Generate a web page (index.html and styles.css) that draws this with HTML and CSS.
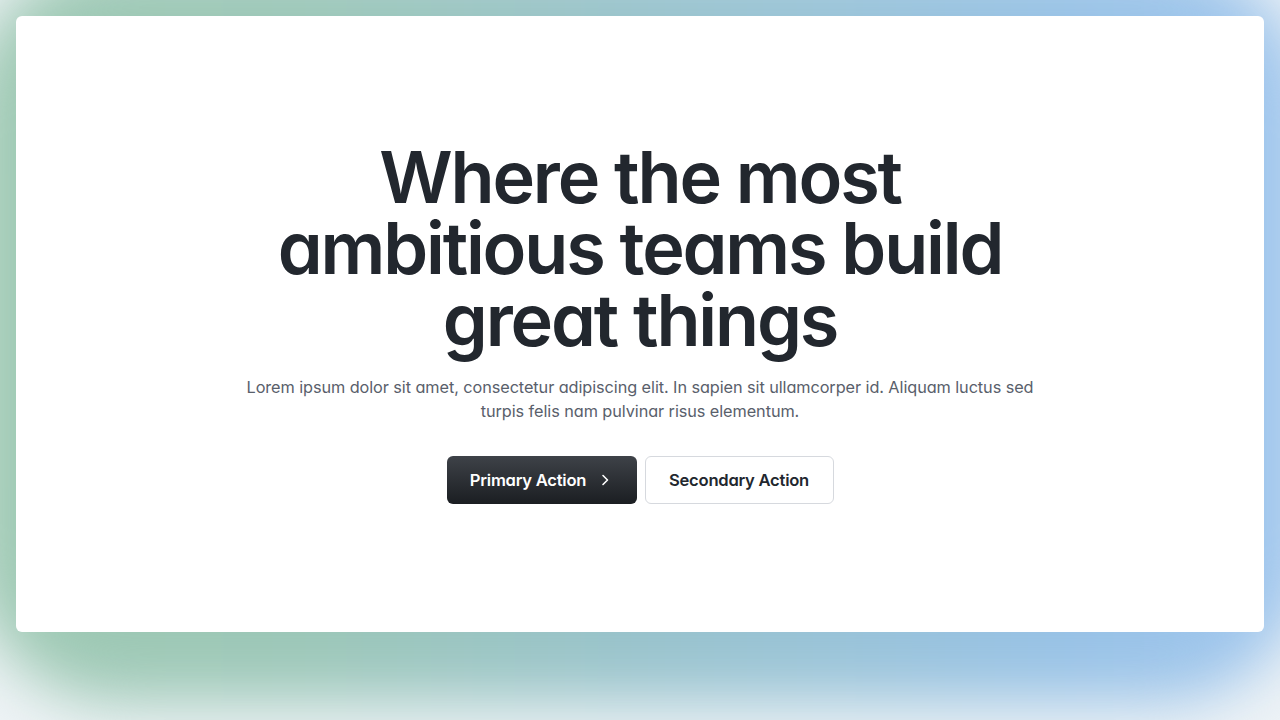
FILE: index.html
```html
<!DOCTYPE html>
<html lang="en">
<head>
<meta charset="utf-8">
<title>Hero</title>
<link rel="stylesheet" href="styles.css">
</head>
<body>
<div class="backdrop"></div>
<main class="card">
  <section class="hero">
    <h1 class="hero-title">Where the most ambitious teams build great things</h1>
    <p class="hero-text">Lorem ipsum dolor sit amet, consectetur adipiscing elit. In sapien sit ullamcorper id. Aliquam luctus sed turpis felis nam pulvinar risus elementum.</p>
    <div class="actions">
      <a class="btn btn-primary" href="#">Primary Action
        <svg class="chev" width="16" height="16" viewBox="0 0 16 16" fill="none"><path d="M6 3.5 10.5 8 6 12.5" stroke="currentColor" stroke-width="1.6" stroke-linecap="round" stroke-linejoin="round"/></svg>
      </a>
      <a class="btn btn-secondary" href="#">Secondary Action</a>
    </div>
  </section>
</main>
</body>
</html>
```
FILE: styles.css
```css
* { box-sizing: border-box; }
html, body { margin: 0; height: 100%; }
body {
  background: #eef3f6;
  padding: 16px;
  font-family: Inter, "Noto Sans", sans-serif;
  font-feature-settings: "cv11" 1;
  overflow: hidden;
  position: relative;
}
.backdrop {
  position: absolute;
  left: -30px;
  right: -30px;
  top: -40px;
  bottom: 18px;
  border-radius: 150px;
  background: linear-gradient(90deg, #9ec9b2 0%, #9cc7b8 25%, #99c3cc 50%, #98c2e6 82%, #a0c6ee 100%);
  filter: blur(30px);
  z-index: 0;
}
.card {
  position: relative;
  z-index: 1;
  background: #fff;
  border-radius: 6px;
  height: 616px;
  display: flex;
  align-items: center;
  justify-content: center;
}
.hero {
  width: 800px;
  display: flex;
  flex-direction: column;
  align-items: center;
  text-align: center;
  margin-top: -3px;
}
.hero-title {
  margin: 0;
  font-size: 72px;
  line-height: 71.5px;
  font-weight: 600;
  letter-spacing: -0.03em;
  color: #22272e;
  width: 760px;
}
.hero-text {
  margin: 20px 0 0;
  font-size: 16.3px;
  line-height: 24px;
  color: #59606b;
  letter-spacing: -0.005em;
}
.actions {
  margin-top: 33px;
  display: flex;
  gap: 8px;
}
.btn {
  display: inline-flex;
  align-items: center;
  justify-content: center;
  gap: 11px;
  height: 48px;
  padding: 0 20px;
  border-radius: 6px;
  font-size: 16.6px;
  font-weight: 600;
  letter-spacing: -0.015em;
  text-decoration: none;
  white-space: nowrap;
}
.btn-primary {
  width: 190px;
  color: #fff;
  background: linear-gradient(180deg, #3e4248 0%, #1b1e22 100%);
}
.btn-secondary {
  width: 189px;
  color: #22272e;
  background: #fff;
  border: 1px solid #d6d9de;
}
.chev { display: block; flex: none; }
```
